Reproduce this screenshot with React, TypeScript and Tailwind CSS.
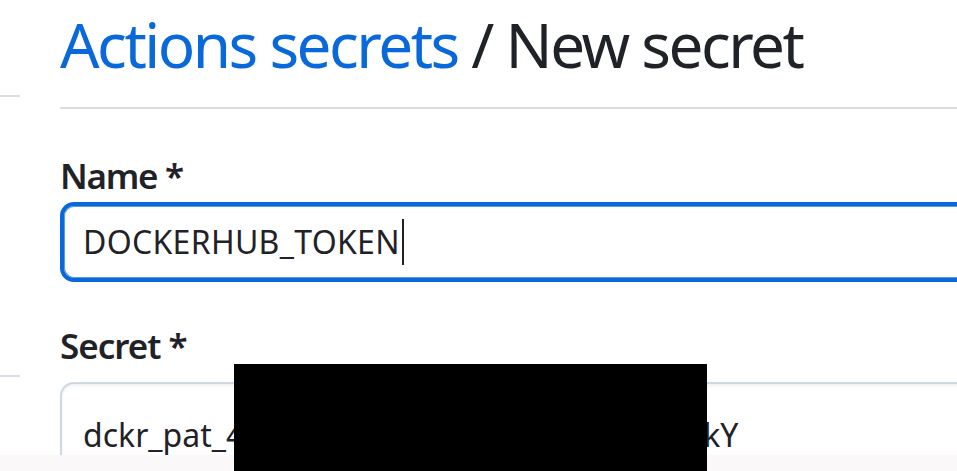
export default function App() {
  return (
    <div
      className="relative flex h-[471px] w-full overflow-hidden bg-white text-[#1f2328]"
      style={{ fontFamily: '"Noto Sans", "Open Sans", sans-serif' }}
    >
      {/* sidebar edge */}
      <div className="w-[20px] shrink-0">
        <div className="mt-[95px] h-[2px] bg-[#d8dee4]"></div>
        <div className="mt-[278px] h-[2px] bg-[#d8dee4]"></div>
      </div>

      <div className="ml-[40px] w-[1000px] shrink-0">
        <h1 className="whitespace-nowrap pt-[13px] text-[62px] leading-none font-normal tracking-[-2.5px]">
          <a className="text-[#0969da]">Actions secrets</a> / New secret
        </h1>
        <div className="mt-[32px] h-[2px] bg-[#d8dee4]"></div>

        <label className="mt-[49px] block text-[35px] leading-none font-semibold tracking-[-1.3px]">
          Name *
        </label>
        <div className="mt-[9px] flex h-[80px] items-center rounded-[14px] border-[4px] border-[#0969da] px-[19px] shadow-[inset_0_0_0_1px_#5a9be6]">
          <span className="text-[32px] leading-none tracking-[0.3px]">DOCKERHUB_TOKEN</span>
          <span className="ml-[2px] h-[46px] w-[2px] bg-[#1f2328]"></span>
        </div>

        <label className="mt-[46px] block text-[35px] leading-none font-semibold tracking-[-1px]">
          Secret *
        </label>
        <div className="mt-[19px] h-[120px] rounded-[14px] border-[2px] border-[#cfd8e2] px-[21px] pt-[35px] shadow-[inset_0_2px_3px_rgba(208,215,222,0.35)]">
          <div className="whitespace-nowrap text-[32px] leading-none">
            <span>dckr_pat_4</span>
            <span className="inline-block w-[459px]"></span>
            <span>kY</span>
          </div>
        </div>
      </div>

      {/* bottom band */}
      <div className="absolute bottom-0 left-0 h-[16px] w-full bg-[#faf8f8]"></div>
      {/* redaction */}
      <div className="absolute left-[234px] top-[364px] h-[107px] w-[473px] bg-black"></div>
    </div>
  );
}
